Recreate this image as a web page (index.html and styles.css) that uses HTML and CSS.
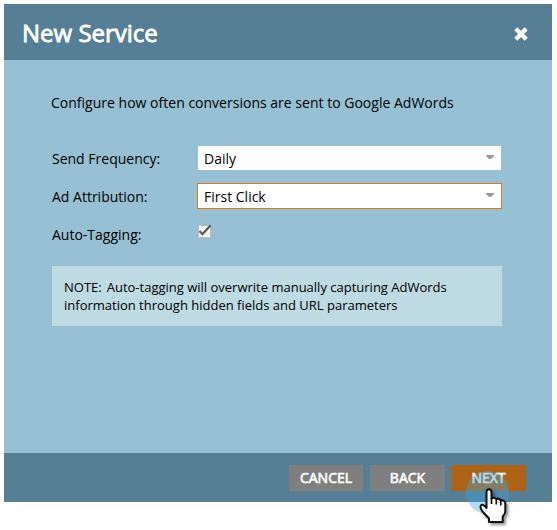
FILE: index.html
```html
<!DOCTYPE html>
<html lang="en">
<head>
<meta charset="utf-8">
<title>New Service</title>
<link rel="stylesheet" href="styles.css">
</head>
<body>
<section class="dialog">
  <header class="dialog-header">
    <h1 class="title"><span>New Service</span></h1>
    <svg class="close" width="16" height="16" viewBox="0 0 16 16"><path d="M2.800 2.800 13.200 13.200M13.200 2.800 2.800 13.200"/></svg>
  </header>
  <div class="dialog-body">
    <p class="intro"><span>Configure how often conversions are sent to Google AdWords</span></p>
    <div class="row">
      <span class="label">Send Frequency:</span>
      <div class="select"><span>Daily</span><svg class="arrow" width="8" height="4" viewBox="0 0 8 4"><path d="M0 0H8V1L5 4H3L0 1Z"/></svg></div>
    </div>
    <div class="row">
      <span class="label">Ad Attribution:</span>
      <div class="select focused"><span>First Click</span><svg class="arrow" width="8" height="4" viewBox="0 0 8 4"><path d="M0 0H8V1L5 4H3L0 1Z"/></svg></div>
    </div>
    <div class="row">
      <span class="label">Auto-Tagging:</span>
      <svg class="checkbox" width="16" height="16" viewBox="0 0 16 16"><rect x="1.5" y="2.500" width="12" height="12"/><path d="M2.500 8 5.500 11 13.700 2.300"/></svg>
    </div>
    <div class="note"><span class="note-tag">NOTE:</span>Auto-tagging will overwrite manually capturing AdWords<br><span>information through hidden fields and URL parameters</span></div>
  </div>
  <footer class="dialog-footer">
    <div class="button cancel">CANCEL</div>
    <div class="button back">BACK</div>
    <div class="button next">NEXT</div>
  </footer>
</section>
<div class="halo"></div>
<svg class="cursor" width="36" height="44" viewBox="0 0 36 44">
  <path class="hand" d="M9.5 19V5Q9.700 2.200 12 2.200T14.500 5V11.500Q17 9.800 19.300 12Q22 10.800 23.800 13.300Q28 12.800 28.300 17V24Q28 27.500 25.700 29.500V35H12V31.500L5.500 24.500Q2.500 20 4 18.300Q6 16.500 9.500 21Z"/>
  <path class="fingers" d="M14.500 11V17M19.300 12.500V17.500M23.800 13.700V18.500"/>
</svg>
</body>
</html>
```
FILE: styles.css
```css
* { box-sizing: border-box; }
body {
  margin: 0;
  padding: 4px;
  height: 530px;
  overflow: hidden;
  background: #fff;
  font-family: "Open Sans", sans-serif;
  font-size: 14px;
  color: #000;
}
.dialog {
  width: 548px;
  height: 498px;
  display: flex;
  flex-direction: column;
  background: #97c0d4;
}
.dialog-header {
  height: 56px;
  padding: 2px 23px 0 18px;
  display: flex;
  align-items: center;
  justify-content: space-between;
  background: #567e94;
}
.title {
  margin: 0;
  color: #fff;
  font-size: 24px;
  font-weight: 400;
  line-height: 32px;
  -webkit-text-stroke: 0.8px #fff;
}
.close { margin-top: 2px; fill: none; stroke: #fff; stroke-width: 4.2; }
.dialog-body { flex: 1; padding: 33px 50px 0 47px; }
.intro { margin: 0 0 33px; line-height: 20px; letter-spacing: 0.01px; white-space: nowrap; }
.row { height: 38px; display: flex; align-items: flex-start; padding-left: 1px; }
.label { width: 145px; line-height: 26px; white-space: nowrap; }
.select {
  width: 303px;
  height: 24px;
  margin-left: 1px;
  padding: 0 7px 0 6px;
  display: flex;
  justify-content: space-between;
  background: #fff;
  line-height: 26px;
}
.select.focused {
  width: 305px;
  height: 26px;
  margin: -1px 0 0;
  padding: 0 7px 0 6px;
  border: 1px solid #d97c1d;
}
.arrow { margin-top: 9px; fill: #999; }
.checkbox { margin-top: 1px; }
.checkbox rect { fill: #f4f4f4; stroke: #bbb; }
.checkbox path { fill: none; stroke: #5c5c5c; stroke-width: 2.3; }
.note {
  width: 450px;
  height: 60px;
  margin: 6px 0 0 1px;
  padding: 12px 12px;
  background: #bedae2;
  font-size: 13px;
  line-height: 18px;
  white-space: nowrap;
}
.note-tag { margin-right: 5px; }
.dialog-footer {
  height: 49px;
  padding: 12px 26px 0 0;
  display: flex;
  justify-content: flex-end;
  background: #567e94;
}
.button {
  width: 75px;
  height: 26px;
  background: #7f7f7f;
  color: #fff;
  line-height: 26px;
  text-align: center;
  -webkit-text-stroke: 0.6px #fff;
}
.cancel { width: 74px; margin-right: 7px; }
.back { margin-right: 6px; }
.next { background: #ad6318; }
.halo {
  position: absolute;
  left: 466px;
  top: 471px;
  width: 43px;
  height: 43px;
  border-radius: 50%;
  background: rgba(65, 165, 222, 0.4);
}
.cursor { position: absolute; left: 477px; top: 487px; filter: drop-shadow(2px 2px 1.5px rgba(0, 0, 0, 0.45)); }
.hand { fill: #fff; stroke: #111; stroke-width: 2; stroke-linejoin: round; }
.fingers { fill: none; stroke: #111; stroke-width: 1.7; }
```
